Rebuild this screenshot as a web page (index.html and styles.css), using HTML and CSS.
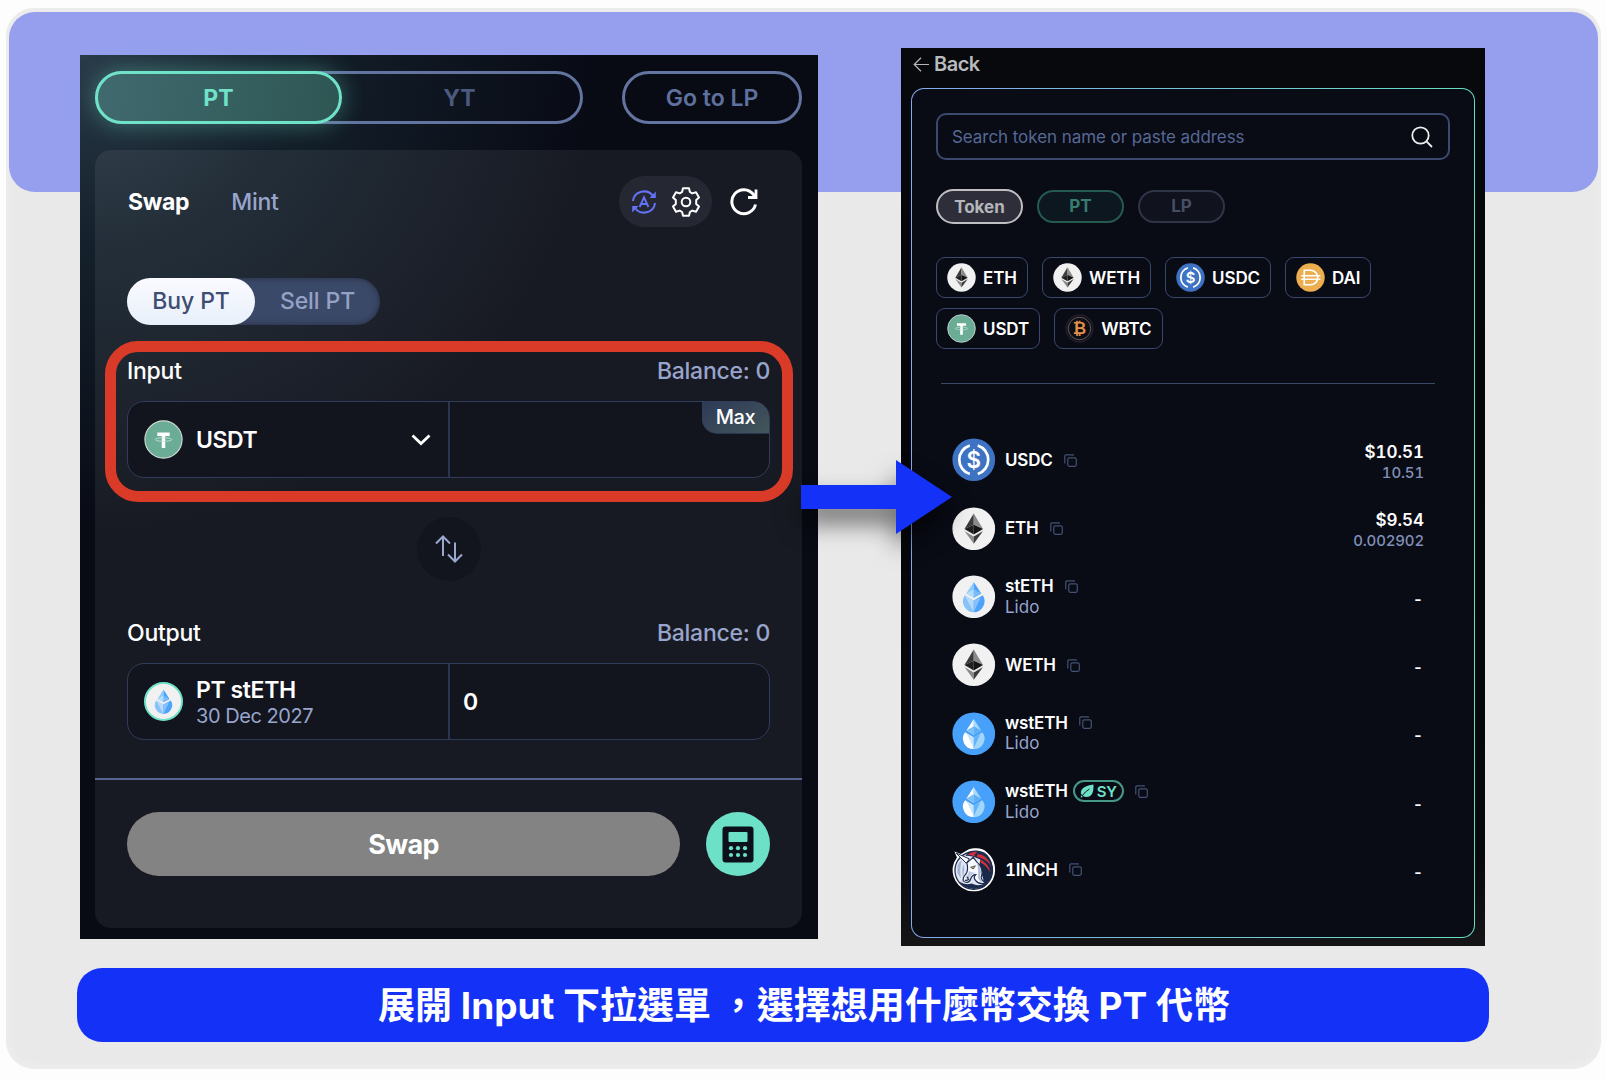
FILE: index.html
```html
<!DOCTYPE html>
<html lang="zh-Hant">
<head>
    <meta charset="UTF-8">
    <meta name="viewport" content="width=device-width, initial-scale=1.0">
    <title>Swap PT</title>
    <link rel="stylesheet" href="styles.css">
</head>
<body>
    <!-- Shared icons -->
    <svg class="sprite" width="0" height="0">
        <symbol id="eth" viewBox="0 0 44 44">
            <circle cx="22" cy="22" r="21.6" fill="#f1f1f1"/>
            <path d="M22 6.500L12.600 22.200L22 18z" fill="#3c3c3b"/>
            <path d="M22 6.500L31.400 22.200L22 18z" fill="#8b8b8b"/>
            <path d="M12.600 22.200L22 18v9.700z" fill="#202020"/>
            <path d="M31.400 22.200L22 18v9.700z" fill="#141414"/>
            <path d="M12.600 24.300L22 29.800v7.400z" fill="#8a8a8a"/>
            <path d="M31.400 24.300L22 29.800v7.400z" fill="#3c3c3b"/>
        </symbol>
        <symbol id="usdc" viewBox="0 0 44 44">
            <circle cx="22" cy="22" r="21.6" fill="#3e73c4"/>
            <path d="M18 7.500a15.200 15.200 0 0 0 0 29M26 7.500a15.200 15.200 0 0 1 0 29" fill="none" stroke="#fff" stroke-width="2.700"/>
            <text x="22" y="30.200" class="logo-text" font-size="22.500" text-anchor="middle" fill="#fff">$</text>
        </symbol>
        <symbol id="usdt" viewBox="0 0 44 44">
            <circle cx="22" cy="22" r="21" fill="#6aac95" stroke="#d5dfdb" stroke-width="1.200"/>
            <path d="M15 14h14v4h-5v13.500h-4V18h-5z" fill="#fff"/>
            <ellipse cx="22" cy="22" rx="9.400" ry="2" fill="none" stroke="#c5e0d7" stroke-width="1"/>
        </symbol>
        <symbol id="dai" viewBox="0 0 44 44">
            <circle cx="22" cy="22" r="21.600" fill="#ecae4f"/>
            <path d="M12.500 11h9.500a11 11 0 0 1 0 22h-9.500z" fill="none" stroke="#fff" stroke-width="2.500"/>
            <path d="M8 19.200h29M8 24.800h29" stroke="#fff" stroke-width="2.200"/>
        </symbol>
        <symbol id="wbtc" viewBox="0 0 44 44">
            <circle cx="22" cy="22" r="20.500" fill="#131019" stroke="#241e29" stroke-width="2"/>
            <circle cx="22" cy="22" r="17" fill="#0d0d13" stroke="#6d6870" stroke-width="1.300"/>
            <text x="22" y="31" class="btc-text" font-size="25" text-anchor="middle" fill="#e3914a">₿</text>
        </symbol>
        <symbol id="steth" viewBox="0 0 44 44">
            <circle cx="22" cy="22" r="21.600" fill="#f1f1f1"/>
            <path d="M22 7l-7.600 11.800L22 23z" fill="#8fc9fb"/>
            <path d="M22 7l7.600 11.800L22 23z" fill="#4ba3fb"/>
            <path d="M14.400 18.800L22 14.500v8.500z" fill="#b9dcfb"/>
            <path d="M29.600 18.800L22 14.500v8.500z" fill="#78bdfb"/>
            <path d="M12.800 20.600L22 25.700v12A11.200 11.200 0 0 1 12.800 20.600z" fill="#88c3f8"/>
            <path d="M12.800 20.600L22 25.700v12z" fill="#b8dafa"/>
            <path d="M31.200 20.600L22 25.700v12A11.200 11.200 0 0 0 31.200 20.600z" fill="#4ba3fb"/>
            <path d="M29 23L22 25.700v12z" fill="#86c2f9"/>
        </symbol>
        <symbol id="wsteth" viewBox="0 0 44 44">
            <circle cx="22" cy="22" r="21.600" fill="#47a1fa"/>
            <path d="M22 7l-7.400 11.800L22 23z" fill="#fff"/>
            <path d="M22 7l7.400 11.800L22 23z" fill="#a9dafb"/>
            <path d="M14.600 18.800L22 14.500v8.500z" fill="#79c0fb"/>
            <path d="M29.400 18.800L22 14.500v8.500z" fill="#5cb0fa"/>
            <path d="M13.200 20.600L22 25.700v11.800A10.600 10.600 0 0 1 13.200 20.600z" fill="#fff"/>
            <path d="M14.800 21.800L22 25.700v11z" fill="#c4e6fd"/>
            <path d="M30.800 20.600L22 25.700v11.800A10.600 10.600 0 0 0 30.800 20.600z" fill="#a3d6fb"/>
            <path d="M28.500 22.500L22 25.700v11z" fill="#62b3fa"/>
        </symbol>
        <symbol id="oneinch" viewBox="0 0 44 44">
            <path d="M2.500 3.500L9 6L14 3Q18-.5 24 .3Q31 0 35.500 4.500Q43.600 11 43.600 22A21.500 21.500 0 1 1 5 9.500z" fill="#fff"/>
            <circle cx="22" cy="22.800" r="19" fill="#dfe6f4" stroke="#1d2b4d" stroke-width="1.300"/>
            <path d="M29 9Q41 15 40.600 26Q38 36 30 41Q35 32 27 22z" fill="#1b2948"/>
            <path d="M13.500 8Q17 2 25 2.500Q34 3 38 10Q42 16 40.500 24Q37 13 26 10.500Q18 7 13.500 8z" fill="#1d2b4d"/>
            <path d="M16 7Q20 3 26 4Q22 6 23 8.500Q19 7 16 7zM26 6Q36 7 39.500 18Q34 10 25 9zM28 11.500Q37 15 39 25Q34 17 29 15z" fill="#cf303c"/>
            <path d="M4 5L14.500 15.500L17.500 11z" fill="#fff" stroke="#1d2b4d" stroke-width="1"/>
            <path d="M15 15L21.500 9.500L25 14Q33 21 29.500 30Q31 35 35 35Q28 38 24 33Q21 30 24 27Q20 27 18.500 32.500Q16 36.500 11.500 33.500Q10.500 30 14 26.500Q17 22 15 15z" fill="#f7f9ff" stroke="#1d2b4d" stroke-width="1.200"/>
            <path d="M25 14.500Q31 21 28.500 28Q29 33 32 35Q25 33 26.500 27Q27 21 25 14.500z" fill="#aebbd8"/>
            <path d="M17 23Q17 27 13.500 29Q15 31 18 29.500Q20 26 24 25Q19 25 17 23z" fill="#bcc9e4"/>
            <path d="M5.500 25Q4.500 15 10 12.500Q7.500 20 9 31zM11.500 16.500Q9.500 22 11 29Q13.500 22 11.500 16.500z" fill="#a6b4d4"/>
            <path d="M18.800 19.500l4.800-1.500-2 3.200z" fill="#e9b72d" stroke="#1d2b4d" stroke-width=".7"/>
            <path d="M13 32.500q3 .8 4.500-1.500" fill="none" stroke="#1d2b4d" stroke-width="1.100"/>
            <circle cx="15.800" cy="30" r="1" fill="#1d2b4d"/>
            <path d="M7.500 34Q13 38 20 36Q31 41 39 30Q34 41 22 41.500Q12 41 7.500 34z" fill="#1d2b4d"/>
        </symbol>
        <symbol id="copy" viewBox="0 0 13 13">
            <rect x="3.800" y="3.800" width="8.500" height="8.500" rx="1.500" fill="none" stroke="currentColor" stroke-width="1.200"/>
            <path d="M.8 9.500V2Q.8.800 2 .8h7.200v1" fill="none" stroke="currentColor" stroke-width="1.200"/>
        </symbol>
    </svg>

    <div class="board">
        <div class="band"></div>

        <div class="screens">
            <section class="swap-screen">
                <div class="tabs">
                    <div class="tab-group">
                        <button class="tab active">PT</button>
                        <button class="tab">YT</button>
                    </div>
                    <button class="lp-button">Go to LP</button>
                </div>

                <div class="card">
                    <div class="card-header">
                        <span class="mode selected">Swap</span>
                        <span class="mode">Mint</span>
                        <div class="tools">
                            <svg width="26" height="26" viewBox="0 0 26 26" fill="none" stroke="#6273f8" stroke-width="2">
                                <path d="M2 12A11 10.500 0 0 1 22 7M24 14A11 10.500 0 0 1 4 19"/>
                                <path d="M24.800 2.500v6.500H18.500zM1.200 23.500v-6.500H7.500z" fill="#6273f8" stroke="none"/>
                                <path d="M8.600 18L13 8.300L17.400 18M10.300 15h5.400" stroke-width="1.900"/>
                            </svg>
                            <svg width="30" height="30" viewBox="0 0 30 30" fill="none" stroke="#fff" stroke-width="2" stroke-linejoin="round">
                                <path d="M12 1.200h6l.9 3.800 2.400 1.400 3.700-1.100 3 5.200-2.800 2.600v3.800l2.800 2.600-3 5.200-3.700-1.100-2.400 1.400-.9 3.800h-6l-.9-3.800-2.400-1.400-3.700 1.100-3-5.200 2.800-2.600v-3.800L2 10.500l3-5.200 3.700 1.100L11.100 5z"/>
                                <circle cx="15" cy="15" r="4.300"/>
                            </svg>
                        </div>
                        <svg class="refresh" width="28" height="28" viewBox="0 0 28 28" fill="none" stroke="#fff" stroke-width="3">
                            <path d="M25.500 16.500A12 12 0 1 1 23.500 6.500L25 8.500" />
                            <path d="M26 1.500v8h-8" stroke-width="2.800"/>
                        </svg>
                    </div>

                    <div class="toggle">
                        <span class="toggle-item on">Buy PT</span>
                        <span class="toggle-item">Sell PT</span>
                    </div>

                    <div class="field-label">
                        <span>Input</span>
                        <span class="balance">Balance: 0</span>
                    </div>
                    <div class="field">
                        <div class="field-token">
                            <svg class="field-icon"><use href="#usdt"/></svg>
                            <span class="field-name">USDT</span>
                            <svg class="chevron" width="20" height="12" viewBox="0 0 20 12"><path d="M1.500 1.500L10 9.500L18.500 1.500" fill="none" stroke="#fff" stroke-width="2.800"/></svg>
                        </div>
                        <div class="field-value"></div>
                        <span class="max">Max</span>
                    </div>

                    <div class="direction">
                        <svg width="28" height="28" viewBox="0 0 28 28" fill="none" stroke="#9aa8cf" stroke-width="2">
                            <path d="M8 21V2M1 8.500l7-7 7 7M20 7.500v19M13 19.500l7 7 7-7"/>
                        </svg>
                    </div>

                    <div class="field-label">
                        <span>Output</span>
                        <span class="balance">Balance: 0</span>
                    </div>
                    <div class="field">
                        <div class="field-token">
                            <svg class="field-icon ringed"><use href="#steth"/></svg>
                            <div class="pt-name">
                                <span class="field-name">PT stETH</span>
                                <span class="expiry">30 Dec 2027</span>
                            </div>
                        </div>
                        <div class="field-value">0</div>
                    </div>

                    <div class="actions">
                        <button class="swap-button">Swap</button>
                        <button class="calc-button">
                            <svg width="32" height="37" viewBox="0 0 32 37">
                                <rect x=".5" y=".5" width="31" height="36" rx="3" fill="#0b101b"/>
                                <rect x="6.500" y="6" width="19" height="10" rx="1" fill="#6de1c7"/>
                                <g fill="#6de1c7">
                                    <circle cx="9" cy="22.200" r="2.100"/><circle cx="16" cy="22.200" r="2.100"/><circle cx="23" cy="22.200" r="2.100"/>
                                    <circle cx="9" cy="29" r="2.100"/><circle cx="16" cy="29" r="2.100"/><circle cx="23" cy="29" r="2.100"/>
                                </g>
                            </svg>
                        </button>
                    </div>
                </div>
                <div class="highlight"></div>
            </section>

            <section class="token-screen">
                <div class="back">
                    <svg width="17" height="15" viewBox="0 0 17 15"><path d="M16 7.500H1.200M8 .8L1.200 7.500L8 14.200" fill="none" stroke="#b5b6b9" stroke-width="1.200"/></svg>
                    <span>Back</span>
                </div>

                <div class="panel">
                    <div class="search">
                        <span>Search token name or paste address</span>
                        <svg width="22" height="22" viewBox="0 0 22 22" fill="none" stroke="#eee" stroke-width="1.800"><circle cx="9.500" cy="9.500" r="8.200"/><path d="M15.200 15.200L21 21"/></svg>
                    </div>

                    <div class="filters">
                        <span class="filter filter-token">Token</span>
                        <span class="filter filter-pt">PT</span>
                        <span class="filter">LP</span>
                    </div>

                    <div class="chips">
                        <span class="chip"><svg><use href="#eth"/></svg>ETH</span>
                        <span class="chip"><svg><use href="#eth"/></svg>WETH</span>
                        <span class="chip"><svg><use href="#usdc"/></svg>USDC</span>
                        <span class="chip"><svg><use href="#dai"/></svg>DAI</span>
                        <span class="chip"><svg><use href="#usdt"/></svg>USDT</span>
                        <span class="chip"><svg><use href="#wbtc"/></svg>WBTC</span>
                    </div>

                    <div class="token-list">
                        <div class="token-row">
                            <svg class="token-icon"><use href="#usdc"/></svg>
                            <div class="token-name"><div class="symbol">USDC <svg class="copy"><use href="#copy"/></svg></div></div>
                            <div class="amount"><b>$10.51</b><span>10.51</span></div>
                        </div>
                        <div class="token-row">
                            <svg class="token-icon"><use href="#eth"/></svg>
                            <div class="token-name"><div class="symbol">ETH <svg class="copy"><use href="#copy"/></svg></div></div>
                            <div class="amount"><b>$9.54</b><span>0.002902</span></div>
                        </div>
                        <div class="token-row">
                            <svg class="token-icon"><use href="#steth"/></svg>
                            <div class="token-name"><div class="symbol">stETH <svg class="copy"><use href="#copy"/></svg></div><div class="issuer">Lido</div></div>
                            <div class="amount none">-</div>
                        </div>
                        <div class="token-row">
                            <svg class="token-icon"><use href="#eth"/></svg>
                            <div class="token-name"><div class="symbol">WETH <svg class="copy"><use href="#copy"/></svg></div></div>
                            <div class="amount none">-</div>
                        </div>
                        <div class="token-row">
                            <svg class="token-icon"><use href="#wsteth"/></svg>
                            <div class="token-name"><div class="symbol">wstETH <svg class="copy"><use href="#copy"/></svg></div><div class="issuer">Lido</div></div>
                            <div class="amount none">-</div>
                        </div>
                        <div class="token-row">
                            <svg class="token-icon"><use href="#wsteth"/></svg>
                            <div class="token-name">
                                <div class="symbol">wstETH
                                    <span class="sy"><svg width="14" height="14" viewBox="0 0 14 14"><path d="M13.500.500Q14 13 6.500 13Q4.500 13 3 12L1.200 13.800L.5 13L2 11Q0 9 1.500 6Q4 1.500 13.500.500z" fill="#6de1c7"/><path d="M2 12Q5 7.500 9.500 5" stroke="#0b1a20" stroke-width="1" fill="none"/></svg>SY</span>
                                    <svg class="copy"><use href="#copy"/></svg>
                                </div>
                                <div class="issuer">Lido</div>
                            </div>
                            <div class="amount none">-</div>
                        </div>
                        <div class="token-row">
                            <svg class="token-icon"><use href="#oneinch"/></svg>
                            <div class="token-name"><div class="symbol">1INCH <svg class="copy"><use href="#copy"/></svg></div></div>
                            <div class="amount none">-</div>
                        </div>
                    </div>
                </div>
            </section>
        </div>

        <svg class="arrow" width="151" height="74" viewBox="0 0 151 74"><path d="M0 25h95V0l56 37-56 37V49H0z" fill="#1431f8"/></svg>

        <div class="caption">展開 Input 下拉選單 ，選擇想用什麼幣交換 PT 代幣</div>
    </div>
</body>
</html>
```
FILE: styles.css
```css
:root {
    --line: #2a3650;
    --muted: #98a5cc;
    --mint: #6fe2c8;
    --slate: #5f719f;
    --night: #080a14;
    --blue: #1431f8;
}

* {
    box-sizing: border-box;
}

body {
    margin: 0;
    padding: 8px 5px 0 6px;
    height: 1080px;
    overflow: hidden;
    background: #fdfdfd;
    font-family: Inter, "Noto Sans CJK TC", sans-serif;
    color: #fff;
}

button {
    font-family: inherit;
    border: none;
    background: none;
    padding: 0;
}

svg {
    display: block;
    flex: none;
}

.sprite {
    display: none;
}

.logo-text {
    font-family: Inter, sans-serif;
    font-weight: 600;
}

.btc-text {
    font-family: "DejaVu Sans", sans-serif;
    font-weight: 700;
}

.board {
    position: relative;
    height: 1061px;
    border-radius: 28px;
    background: #e9e9e9;
    box-shadow: inset 0 0 12px #f0f0f0;
}

.band {
    position: absolute;
    top: 4px;
    left: 3px;
    right: 3px;
    height: 180px;
    border-radius: 26px;
    background: #959fee;
}

.screens {
    position: relative;
    display: flex;
    align-items: flex-start;
    gap: 83px;
    padding: 40px 0 0 74px;
}

/* Swap form */
.swap-screen {
    position: relative;
    width: 738px;
    height: 884px;
    margin-top: 7px;
    padding: 16px 16px 0 15px;
    background: radial-gradient(ellipse 520px 480px at 0 0, #293a48 0%, #14202b 40%, transparent 100%), var(--night);
}

.tabs {
    display: flex;
    justify-content: space-between;
}

.tab-group {
    display: flex;
    width: 488px;
    height: 53px;
    border-radius: 27px;
    box-shadow: inset 0 0 0 3px #62749f;
}

.tab {
    flex: 1;
    font-size: 23px;
    font-weight: 700;
    color: #4b5a7e;
    padding-right: 6px;
}

.tab.active {
    flex: 0 0 247px;
    padding: 0;
    border: 3px solid var(--mint);
    border-radius: 27px;
    background: linear-gradient(100deg, #416a70, #2d5653);
    box-shadow: 0 0 24px rgba(111, 226, 200, 0.4);
    color: var(--mint);
}

.lp-button {
    width: 180px;
    height: 53px;
    border: 3px solid #62749f;
    border-radius: 27px;
    font-size: 23px;
    font-weight: 600;
    color: var(--slate);
}

.card {
    height: 778px;
    margin-top: 26px;
    padding: 26px 32px 0;
    border-radius: 16px;
    background: rgba(255, 255, 255, 0.067);
}

.card-header {
    display: flex;
    align-items: center;
    height: 51px;
    padding: 0 12px 0 1px;
}

.mode {
    font-size: 23px;
    font-weight: 500;
    letter-spacing: -0.3px;
    color: var(--muted);
}

.mode.selected {
    margin-right: 42px;
    font-weight: 700;
    color: #fff;
}

.tools {
    display: flex;
    align-items: center;
    justify-content: center;
    gap: 14px;
    width: 93px;
    height: 51px;
    margin-left: auto;
    border-radius: 26px;
    background: #252732;
}

.refresh {
    margin-left: 18px;
}

.toggle {
    display: flex;
    width: 253px;
    height: 47px;
    margin-top: 51px;
    border-radius: 24px;
    background: #3b4969;
    box-shadow: inset 0 0 7px rgba(0, 0, 0, 0.4);
    font-size: 23px;
    font-weight: 500;
    letter-spacing: -0.1px;
    line-height: 47px;
    text-align: center;
}

.toggle-item {
    flex: 1;
    color: #94a2c6;
}

.toggle-item.on {
    flex: 0 0 128px;
    border-radius: 24px;
    background: linear-gradient(#fafaff, #e8f0fa);
    color: #3f4d72;
}

.field-label {
    display: flex;
    justify-content: space-between;
    margin-top: 31px;
    font-size: 23px;
    font-weight: 500;
    letter-spacing: -0.25px;
    line-height: 30px;
}

.balance {
    color: var(--muted);
}

.field {
    position: relative;
    display: flex;
    height: 77px;
    margin-top: 15px;
    border: 1px solid #303d5a;
    border-radius: 17px;
    background: #12141e;
}

.field-token {
    display: flex;
    align-items: center;
    gap: 13px;
    width: 322px;
    padding: 0 17px 0 16px;
    border-right: 2px solid var(--line);
}

.field-icon {
    width: 39px;
    height: 39px;
}

.field-icon.ringed {
    border: 2px solid var(--mint);
    border-radius: 50%;
    background: #f1f1f1;
}

.field-name {
    font-size: 23px;
    font-weight: 600;
    letter-spacing: -0.4px;
}

.chevron {
    margin-left: auto;
}

.max {
    position: absolute;
    top: 0;
    right: 0;
    width: 67px;
    height: 32px;
    border-bottom: 1px solid var(--line);
    border-radius: 0 15px 0 15px;
    background: linear-gradient(150deg, #2d3a57, #43565b);
    font-size: 20px;
    font-weight: 500;
    letter-spacing: -0.4px;
    line-height: 31px;
    text-align: center;
}

.pt-name {
    display: flex;
    flex-direction: column;
    padding-top: 2px;
}

.pt-name .field-name {
    line-height: 27px;
}

.expiry {
    font-size: 20px;
    letter-spacing: -0.45px;
    line-height: 24px;
    color: var(--muted);
}

.field-value {
    padding-left: 13px;
    font-size: 23px;
    font-weight: 600;
    line-height: 76px;
}

.direction {
    display: flex;
    align-items: center;
    justify-content: center;
    width: 64px;
    height: 64px;
    margin: 39px auto 0;
    border-radius: 50%;
    background: #12141e;
}

.direction + .field-label {
    margin-top: 37px;
}

.actions {
    display: flex;
    justify-content: space-between;
    margin: 38px -32px 0;
    padding: 32px 32px 0;
    border-top: 2px solid #56658f;
}

.swap-button {
    width: 553px;
    height: 64px;
    border-radius: 32px;
    background: #838383;
    color: #fff;
    font-size: 27px;
    font-weight: 700;
    letter-spacing: -0.7px;
}

.calc-button {
    display: flex;
    align-items: center;
    justify-content: center;
    width: 64px;
    height: 64px;
    border-radius: 50%;
    background: #6de1c7;
}

.highlight {
    position: absolute;
    top: 286px;
    left: 25px;
    width: 688px;
    height: 161px;
    border: 11px solid #d93b28;
    border-radius: 33px;
}

/* Token picker */
.token-screen {
    width: 584px;
    height: 898px;
    background: linear-gradient(#07090c, #050609 40%, #08090c 90%, #151518);
}

.back {
    display: flex;
    align-items: center;
    gap: 4px;
    height: 32px;
    margin-bottom: 8px;
    padding-left: 12px;
    font-size: 20px;
    font-weight: 600;
    letter-spacing: -0.5px;
    color: #b9babd;
}

.panel {
    width: 564px;
    height: 850px;
    margin-left: 10px;
    padding: 24px;
    border: 1px solid transparent;
    border-radius: 13px;
    background: linear-gradient(#090b15, #090b15) padding-box, linear-gradient(90deg, #84aaf0, #65dfc0) border-box;
}

.search {
    display: flex;
    align-items: center;
    justify-content: space-between;
    height: 47px;
    padding: 0 15px 0 14px;
    border: 2px solid #3c4a70;
    border-radius: 10px;
    color: #576996;
    font-size: 17px;
    letter-spacing: -0.06px;
}

.filters {
    display: flex;
    align-items: center;
    gap: 14px;
    height: 36px;
    margin-top: 28px;
}

.filter {
    width: 87px;
    height: 33px;
    border: 2px solid #2f3547;
    border-radius: 17px;
    background: #10121e;
    color: #474e63;
    font-size: 17px;
    font-weight: 700;
    line-height: 29px;
    text-align: center;
}

.filter-token {
    height: 35px;
    border: 2px solid #bfbfc1;
    border-radius: 18px;
    background: #2d2e39;
    color: #b5b6bb;
    line-height: 32px;
}

.filter-pt {
    border-color: #265a51;
    background: #0d171f;
    color: #377c71;
}

.chips {
    display: flex;
    flex-wrap: wrap;
    gap: 10px 14px;
    margin: 33px 0 34px;
}

.chip {
    display: flex;
    align-items: center;
    gap: 7px;
    height: 41px;
    padding: 0 10px;
    border: 1px solid #3a486f;
    border-radius: 9px;
    font-size: 17px;
    font-weight: 600;
    letter-spacing: -0.1px;
}

.chip svg {
    width: 29px;
    height: 29px;
}

.token-list {
    margin: 0 15px 0 5px;
    padding-top: 42px;
    border-top: 1px solid #3c4867;
}

.token-row {
    display: flex;
    align-items: center;
    height: 68.3px;
    padding: 0 11px;
    font-feature-settings: "tnum";
}

.token-icon {
    width: 43.5px;
    height: 43.5px;
    margin-right: 9.5px;
}

.symbol {
    display: flex;
    align-items: center;
    height: 21px;
    font-size: 17px;
    font-weight: 600;
    letter-spacing: -0.2px;
}

.issuer {
    height: 21px;
    font-size: 17px;
    line-height: 21px;
    color: var(--muted);
}

.copy {
    width: 13px;
    height: 13px;
    margin-left: 11px;
    color: #445274;
}

.sy {
    display: flex;
    align-items: center;
    gap: 3px;
    height: 22px;
    margin-left: 5px;
    padding: 0 5px;
    border: 2px solid #459787;
    border-radius: 11px;
    color: var(--mint);
    font-size: 15px;
}

.amount {
    display: flex;
    flex-direction: column;
    margin-left: auto;
    padding-top: 4px;
    text-align: right;
    font-weight: 600;
}

.amount b {
    font-size: 17px;
    font-weight: 600;
    line-height: 22px;
}

.amount span {
    font-size: 15px;
    font-weight: 500;
    letter-spacing: -0.15px;
    line-height: 20px;
    color: #8190b7;
}

.amount.none {
    padding: 4px 1px 0 0;
}

.arrow {
    position: absolute;
    top: 452px;
    left: 795px;
    filter: drop-shadow(0 14px 12px rgba(0, 0, 0, 0.55));
}

.caption {
    position: relative;
    width: 1412px;
    height: 74px;
    margin: 22px 0 0 71px;
    padding-left: 42px;
    border-radius: 25px;
    background: var(--blue);
    font-size: 37px;
    font-weight: 700;
    line-height: 75px;
    text-align: center;
    white-space: pre;
}
```
